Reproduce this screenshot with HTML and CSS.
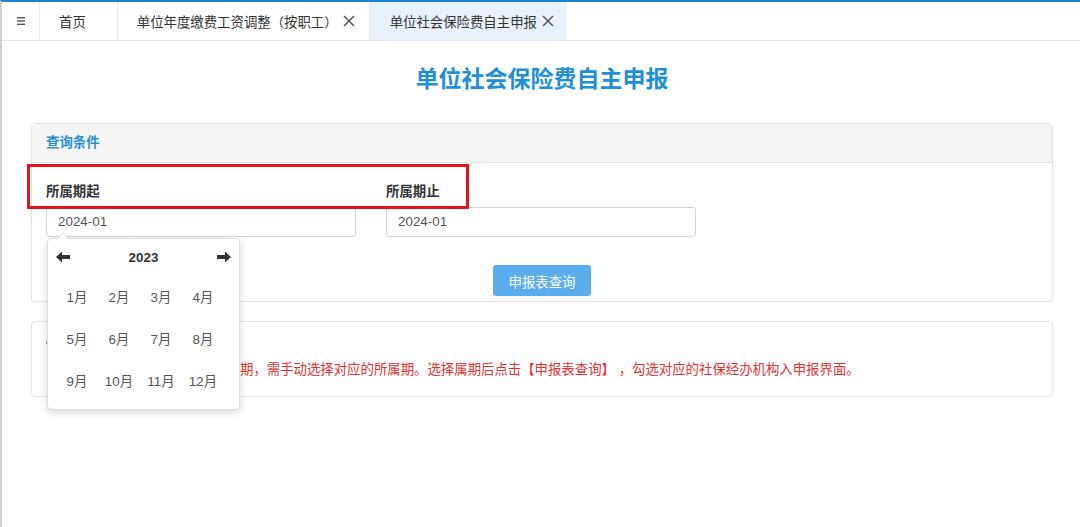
FILE: index.html
```html
<!DOCTYPE html>
<html lang="zh-CN">
<head>
    <meta charset="UTF-8">
    <title>单位社会保险费自主申报</title>
    <link rel="stylesheet" href="styles.css">
</head>
<body>
    <div class="frame">
        <div class="tab-bar">
            <div class="tab menu-tab">
                <svg width="8" height="8" viewBox="0 0 8 8"><rect x="0" y="0" width="8" height="1.4" fill="#555"/><rect x="0" y="3.3" width="8" height="1.4" fill="#555"/><rect x="0" y="6.6" width="8" height="1.4" fill="#555"/></svg>
            </div>
            <div class="tab home-tab">首页</div>
            <div class="tab">单位年度缴费工资调整（按职工）<svg class="close" width="12" height="12" viewBox="0 0 12 12"><path d="M1 1 L11 11 M11 1 L1 11" stroke="#555" stroke-width="1.5"/></svg></div>
            <div class="tab active">单位社会保险费自主申报<svg class="close" width="12" height="12" viewBox="0 0 12 12"><path d="M1 1 L11 11 M11 1 L1 11" stroke="#555" stroke-width="1.5"/></svg></div>
        </div>

        <div class="content">
            <h1 class="page-title">单位社会保险费自主申报</h1>

            <div class="panel">
                <div class="panel-heading">查询条件</div>
                <div class="panel-body">
                    <div class="field-row">
                        <div class="field">
                            <label>所属期起</label>
                            <div class="input">2024-01</div>
                            <div class="month-picker">
                                <div class="picker-head">
                                    <svg width="14" height="12" viewBox="0 0 14 12"><path d="M0 6 L6 0.5 L6 4 L14 4 L14 8 L6 8 L6 11.5 Z" fill="#333"/></svg>
                                    <span class="picker-year">2023</span>
                                    <svg width="14" height="12" viewBox="0 0 14 12"><path d="M14 6 L8 0.5 L8 4 L0 4 L0 8 L8 8 L8 11.5 Z" fill="#333"/></svg>
                                </div>
                                <div class="month-grid">
                                    <span>1月</span><span>2月</span><span>3月</span><span>4月</span>
                                    <span>5月</span><span>6月</span><span>7月</span><span>8月</span>
                                    <span>9月</span><span>10月</span><span>11月</span><span>12月</span>
                                </div>
                            </div>
                        </div>
                        <div class="field">
                            <label>所属期止</label>
                            <div class="input">2024-01</div>
                        </div>
                    </div>
                    <div class="actions">
                        <button class="query-btn">申报表查询</button>
                    </div>
                </div>
            </div>

            <div class="panel tip-panel">
                <div class="tip-title"><span class="tip-mark"></span></div>
                <div class="tip-text">期，需手动选择对应的所属期。选择属期后点击【申报表查询】 ，勾选对应的社保经办机构入申报界面。</div>
            </div>
        </div>

        <div class="mark-box"></div>
    </div>
</body>
</html>
```

FILE: styles.css
```css
body {
    margin: 0;
    padding: 0;
    background-color: white;
    font-family: "Liberation Sans", "Noto Sans CJK SC", sans-serif;
    font-size: 13.4px;
    color: #333;
}
.frame {
    position: relative;
    height: 525px;
    border-top: 2px solid #1e7fd0;
    border-left: 2px solid #cfcfcf;
    overflow: hidden;
}
.tab-bar {
    display: flex;
    height: 38px;
    border-bottom: 1px solid #e6e6e6;
}
.tab {
    display: flex;
    align-items: center;
    height: 38px;
    padding: 0 14px 0 19px;
    border-right: 1px solid #e8e8e8;
    color: #333;
    white-space: nowrap;
}
.menu-tab {
    width: 37px;
    padding: 0;
    justify-content: center;
}
.home-tab {
    padding: 0 31px 0 19px;
}
.tab.active {
    background-color: #e8f2fc;
    padding-left: 20px;
    padding-right: 13px;
    border-right: none;
}
.close {
    margin-left: 5px;
}
.content {
    padding: 0 27px 0 29px;
}
.page-title {
    margin: 23px 0 29px;
    text-align: center;
    font-size: 23px;
    line-height: 30px;
    font-weight: bold;
    color: #1f8fd8;
}
.panel {
    border: 1px solid #e2e2e2;
    border-radius: 4px;
    background-color: white;
}
.panel-heading {
    height: 38px;
    line-height: 38px;
    padding: 0 14px;
    background-color: #f5f5f5;
    border-bottom: 1px solid #e2e2e2;
    color: #2a8fd5;
    font-weight: bold;
}
.panel-body {
    padding: 20px 14px 5px;
}
.field-row {
    display: flex;
    gap: 30px;
}
.field {
    position: relative;
    width: 310px;
}
label {
    display: block;
    font-weight: bold;
    line-height: 18px;
    margin-bottom: 6px;
}
.input {
    box-sizing: border-box;
    height: 30px;
    line-height: 28px;
    padding: 0 11px;
    border: 1px solid #d4d4d4;
    border-radius: 3px;
    color: #555;
}
.actions {
    margin-top: 28px;
    text-align: center;
}
.query-btn {
    width: 98px;
    height: 31px;
    border: none;
    border-radius: 3px;
    background-color: #5badee;
    color: white;
    font-family: "Liberation Sans", "Noto Sans CJK SC", sans-serif;
    font-size: 13.4px;
}
.tip-panel {
    margin-top: 19px;
    padding: 10px 14px 16px;
}
.tip-title {
    height: 20px;
    position: relative;
}
.tip-mark {
    position: absolute;
    left: 0;
    top: 9px;
    width: 2px;
    height: 3px;
    background-color: #999;
}
.tip-text {
    margin-top: 8px;
    padding-left: 194px;
    line-height: 20px;
    color: #e3322f;
}
.month-picker {
    position: absolute;
    left: 1px;
    top: 55px;
    padding: 0 16px 8px 8px;
    box-sizing: border-box;
    width: 193px;
    background-color: white;
    border: 1px solid #dcdcdc;
    border-radius: 4px;
    box-shadow: 0 3px 8px rgba(0, 0, 0, 0.15);
    z-index: 2;
}
.month-picker::before {
    content: "";
    position: absolute;
    left: 9px;
    top: -7px;
    border-left: 6px solid transparent;
    border-right: 6px solid transparent;
    border-bottom: 7px solid #dcdcdc;
}
.month-picker::after {
    content: "";
    position: absolute;
    left: 10px;
    top: -6px;
    border-left: 5px solid transparent;
    border-right: 5px solid transparent;
    border-bottom: 6px solid white;
}
.picker-head {
    display: flex;
    align-items: center;
    justify-content: space-between;
    height: 36px;
    margin-right: -8px;
}
.picker-year {
    font-weight: bold;
    color: #333;
}
.month-grid {
    display: grid;
    grid-template-columns: repeat(4, 42px);
    grid-auto-rows: 42px;
    align-items: center;
    justify-items: center;
    color: #555;
}
.mark-box {
    position: absolute;
    left: 25px;
    top: 162px;
    width: 436px;
    height: 39px;
    border: 3px solid #e0141e;
    z-index: 3;
}
```
